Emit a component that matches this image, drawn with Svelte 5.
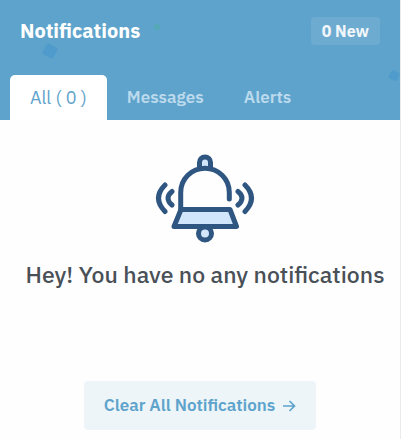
<script>
  let active = $state('all');
  const tabs = [
    { id: 'all', label: 'All ( 0 )' },
    { id: 'messages', label: 'Messages' },
    { id: 'alerts', label: 'Alerts' }
  ];
</script>

<section class="panel">
  <header>
    <svg class="confetti" viewBox="0 0 400 120" preserveAspectRatio="xMaxYMin slice" aria-hidden="true">
      <rect x="44" y="45" width="12" height="12" rx="2" fill="#4e9bcc" transform="rotate(28 50 51)" />
      <rect x="154" y="24" width="6" height="6" rx="2" fill="#55a8b8" transform="rotate(20 157 27)" />
      <rect x="390" y="71" width="9" height="9" rx="2" fill="#4e9bcc" transform="rotate(28 394 75)" />
    </svg>
    <div class="heading">
      <h1>Notifications</h1>
      <span class="badge">0 New</span>
    </div>
    <div class="tabs" role="tablist">
      {#each tabs as tab (tab.id)}
        <button
          type="button"
          role="tab"
          class:active={active === tab.id}
          aria-selected={active === tab.id}
          onclick={() => (active = tab.id)}>{tab.label}</button>
      {/each}
    </div>
  </header>

  <div class="empty">
    <svg class="bell" viewBox="0 0 100 90" aria-hidden="true">
      <g fill="none" stroke="#2f5681" stroke-width="5" stroke-linecap="round" stroke-linejoin="round">
        <path d="M44.500 13V8.500a5.500 5.500 0 0 1 11 0V13" fill="#d1e6fa" />
        <path d="M25.700 55V38.500a24.300 24.300 0 0 1 48.600 0V45" />
        <circle cx="50" cy="79.500" r="6.500" fill="#d1e6fa" />
        <path d="M26 55.500H75L81.500 72.500H19Z" fill="#d1e6fa" />
        <path d="M10 31Q-3 44 10 57.500M17 37.500Q9 44 17 51" />
        <path d="M90 31Q103 44 90 57.500M83 37.500Q91 44 83 51" />
      </g>
    </svg>
    <h2>Hey! You have no any notifications</h2>
  </div>

  <footer>
    <button type="button" class="clear">
      Clear All Notifications
      <svg viewBox="0 0 14 14" aria-hidden="true">
        <path d="M1 7h11.500M7.500 2l5 5-5 5" fill="none" stroke="currentColor" stroke-width="1.700" />
      </svg>
    </button>
  </footer>
</section>

<style>
  :global(body) {
    background: #fefefe;
  }

  .panel {
    border-right: 1px solid #e9eaeb;
    font-family: 'IBM Plex Sans', Roboto, 'Noto Sans', sans-serif;
  }

  h1,
  h2 {
    margin: 0;
  }

  button {
    font: inherit;
    border: 0;
    cursor: pointer;
  }

  header {
    position: relative;
    background: #5ea3cb;
    overflow: hidden;
  }

  .confetti {
    position: absolute;
    inset: 0;
    width: 100%;
    height: 100%;
  }

  .heading {
    position: relative;
    display: flex;
    align-items: center;
    justify-content: space-between;
    padding: 17px 20px 30px;
  }

  h1 {
    font-size: 20px;
    line-height: 28px;
    font-weight: 700;
    color: #fff;
  }

  .badge {
    padding: 0 11px;
    border-radius: 4px;
    background: #6eabd0;
    color: #f1f6fa;
    font-size: 16px;
    line-height: 28px;
    font-weight: 700;
  }

  .tabs {
    position: relative;
    display: flex;
    padding: 0 10px;
  }

  .tabs button {
    padding: 0 20px;
    border-radius: 5px 5px 0 0;
    background: none;
    color: #bcdaed;
    font-size: 17px;
    line-height: 45px;
    font-weight: 600;
  }

  .tabs .active {
    background: #fff;
    color: #5ea3cb;
    font-size: 18px;
    font-weight: 400;
  }

  .empty {
    display: flex;
    flex-direction: column;
    align-items: center;
    padding: 34px 0 0 10px;
  }

  .bell {
    width: 100px;
    height: 90px;
  }

  h2 {
    margin-top: 14px;
    font-size: 23px;
    line-height: 32px;
    font-weight: 500;
    color: #495057;
    white-space: nowrap;
  }

  footer {
    display: flex;
    justify-content: center;
    padding: 91px 0 9px;
  }

  .clear {
    display: flex;
    align-items: center;
    gap: 7px;
    padding: 0 20px;
    border-radius: 4px;
    background: #edf5f9;
    color: #5ea3cb;
    font-size: 17px;
    line-height: 49px;
    font-weight: 600;
  }

  .clear svg {
    width: 14px;
    height: 14px;
  }
</style>
